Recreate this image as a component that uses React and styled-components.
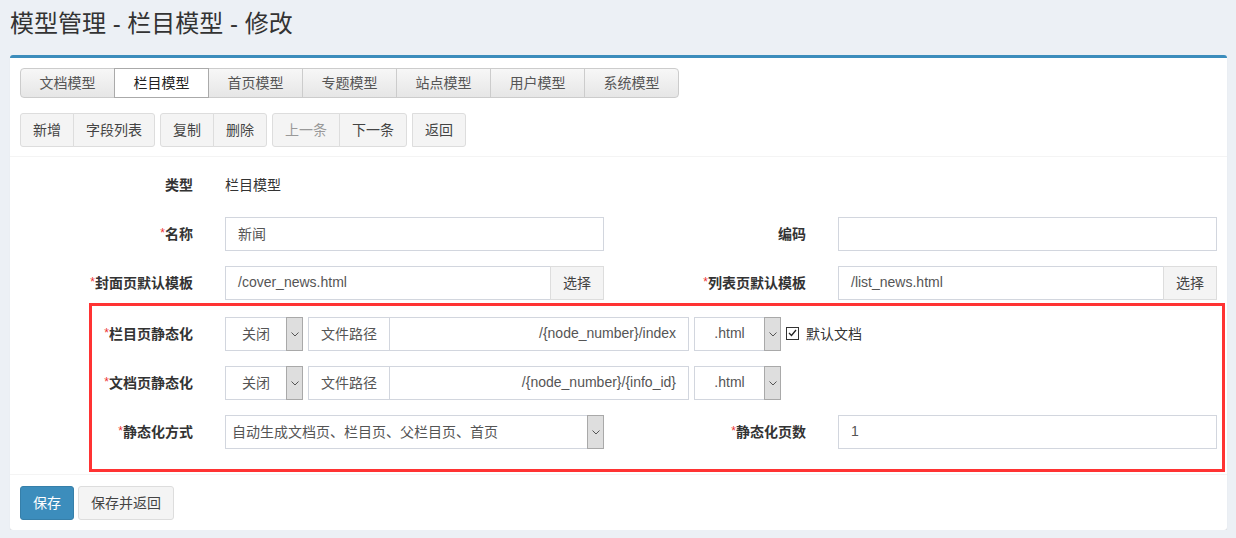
import React from 'react';
import styled, { createGlobalStyle } from 'styled-components';

const GlobalStyle = createGlobalStyle`
  body {
    margin: 0;
    background: #ecf0f5;
    font-family: "Liberation Sans", "Noto Sans CJK SC", sans-serif;
    font-size: 14px;
    color: #333;
  }
`;

const PageTitle = styled.h1`
  margin: 0;
  padding: 7px 10px 14px;
  font-size: 24px;
  font-weight: 400;
  line-height: 34px;
  color: #333;
`;

const Box = styled.div`
  margin: 0 9px 0 10px;
  background: #fff;
  border-top: 3px solid #3c8dbc;
  border-radius: 3px;
  box-shadow: 0 1px 1px rgba(0, 0, 0, 0.1);
`;

const BoxHeader = styled.div`
  padding: 10px 10px 9px;
  border-bottom: 1px solid #f4f4f4;
`;

const Tabs = styled.div`
  display: flex;
  margin-bottom: 15px;
`;

const Tab = styled.div`
  box-sizing: border-box;
  width: 95px;
  height: 30px;
  padding-bottom: 2px;
  margin-left: -1px;
  display: flex;
  align-items: center;
  justify-content: center;
  border: 1px solid ${p => (p.$active ? '#aaa' : '#ccc')};
  background: ${p => (p.$active ? '#fff' : 'linear-gradient(#f7f7f7, #e6e6e6)')};
  color: ${p => (p.$active ? '#222' : '#555')};
  position: relative;
  z-index: ${p => (p.$active ? 1 : 0)};
  &:first-child { margin-left: 0; border-radius: 4px 0 0 4px; }
  &:last-child { border-radius: 0 4px 4px 0; }
`;

const Toolbar = styled.div`
  display: flex;
  gap: 5px;
`;

const BtnGroup = styled.div`
  display: flex;
`;

const Btn = styled.button`
  box-sizing: border-box;
  height: 34px;
  padding: 0 12px 2px;
  font: inherit;
  font-size: 14px;
  border: 1px solid ${p => (p.$primary ? '#367fa9' : '#ddd')};
  background: ${p => (p.$primary ? '#3c8dbc' : '#f4f4f4')};
  color: ${p => (p.$primary ? '#fff' : p.disabled ? '#999' : '#444')};
  border-radius: 3px;
  ${BtnGroup} > & {
    border-radius: 0;
    margin-left: -1px;
  }
  ${BtnGroup} > &:first-child { margin-left: 0; border-radius: 3px 0 0 3px; }
  ${BtnGroup} > &:last-child { border-radius: 0 3px 3px 0; }
`;

const BoxBody = styled.div`
  padding: 11px 10px 2px;
`;

const Row = styled.div`
  display: flex;
  align-items: center;
  height: 34px;
  margin-bottom: 15px;
`;

const Field = styled.div`
  display: flex;
  align-items: center;
  flex: ${p => (p.$half ? `0 0 ${p.$labelWidth + 440}px` : '0 0 auto')};
`;

const Label = styled.div`
  flex: 0 0 ${p => p.$width}px;
  margin-right: 32px;
  padding-bottom: 3px;
  text-align: right;
  font-weight: bold;
  color: #333;
`;

const Star = styled.span`
  color: #e33;
  font-weight: normal;
  font-size: 12px;
  vertical-align: 2px;
`;

const Value = styled.div`
  padding-bottom: 3px;
  color: #333;
`;

const Input = styled.div`
  box-sizing: border-box;
  width: ${p => p.$width || 379}px;
  height: 34px;
  padding: 0 12px 3px;
  display: flex;
  align-items: center;
  justify-content: ${p => (p.$right ? 'flex-end' : 'flex-start')};
  border: 1px solid #d2d6de;
  color: #555;
  background: #fff;
  white-space: nowrap;
`;

const InputGroup = styled.div`
  display: flex;
  & > * + * { margin-left: -1px; }
`;

const Addon = styled.div`
  box-sizing: border-box;
  height: 34px;
  padding: 0 12px 3px;
  display: flex;
  align-items: center;
  border: 1px solid ${p => (p.$grey ? '#ddd' : '#d2d6de')};
  background: ${p => (p.$grey ? '#f4f4f4' : '#fff')};
  color: ${p => (p.$grey ? '#444' : '#555')};
`;

const Select = styled.div`
  box-sizing: border-box;
  width: ${p => p.$width}px;
  height: 34px;
  display: flex;
  border: 1px solid #d2d6de;
  background: #fff;
  color: #555;
`;

const SelectText = styled.div`
  flex: 1;
  display: flex;
  align-items: center;
  justify-content: ${p => (p.$center ? 'center' : 'flex-start')};
  padding: 0 0 3px ${p => (p.$center ? 0 : 6)}px;
  white-space: nowrap;
`;

const Arrow = styled.div`
  box-sizing: border-box;
  width: 17px;
  margin: -1px -1px -1px 0;
  border: 1px solid #a9a9a9;
  background: #dedede;
  display: flex;
  align-items: center;
  justify-content: center;
`;

const Controls = styled.div`
  display: flex;
  align-items: center;
  gap: 5px;
`;

const Check = styled.label`
  display: flex;
  align-items: center;
  gap: 7px;
  color: #333;
  padding-bottom: 2px;
`;

const CheckBox = styled.span`
  box-sizing: border-box;
  width: 13px;
  height: 13px;
  border: 1px solid #333;
  display: flex;
  align-items: center;
  justify-content: center;
  background: #fff;
`;

const Highlight = styled.div`
  margin: -12px -8px 0 69px;
  padding: 11px 0 5px;
  border: 3px solid #f33;
`;

const BoxFooter = styled.div`
  display: flex;
  gap: 4px;
  padding: 11px 10px 10px;
  border-top: 1px solid #f4f4f4;
`;

const Chevron = () => (
  <svg width="8" height="5" viewBox="0 0 8 5">
    <path d="M0.5 0.5 L4 4 L7.5 0.5" fill="none" stroke="#555" strokeWidth="1" />
  </svg>
);

const Dropdown = ({ width, center, children }) => (
  <Select $width={width}>
    <SelectText $center={center}>{children}</SelectText>
    <Arrow><Chevron /></Arrow>
  </Select>
);

const FormLabel = ({ width, required, children }) => (
  <Label $width={width}>
    {required && <Star>*</Star>}
    {children}
  </Label>
);

const tabs = ['文档模型', '栏目模型', '首页模型', '专题模型', '站点模型', '用户模型', '系统模型'];

const StaticRow = ({ lw, label, path, checkbox }) => (
  <Row>
    <Field $labelWidth={lw}>
      <FormLabel width={lw} required>{label}</FormLabel>
      <Controls>
        <Dropdown width={78} center>关闭</Dropdown>
        <InputGroup>
          <Addon>文件路径</Addon>
          <Input $width={300} $right>{path}</Input>
        </InputGroup>
        <Dropdown width={87} center>.html</Dropdown>
        {checkbox && (
          <Check>
            <CheckBox>
              <svg width="9" height="8" viewBox="0 0 9 8">
                <path d="M1 4 L3.5 6.5 L8 1" fill="none" stroke="#222" strokeWidth="1.3" />
              </svg>
            </CheckBox>
            默认文档
          </Check>
        )}
      </Controls>
    </Field>
  </Row>
);

export default function App() {
  const lw = 173;
  const hw = 101;
  return (
    <>
      <GlobalStyle />
      <PageTitle>模型管理 - 栏目模型 - 修改</PageTitle>
      <Box>
        <BoxHeader>
          <Tabs>
            {tabs.map(t => (
              <Tab key={t} $active={t === '栏目模型'}>{t}</Tab>
            ))}
          </Tabs>
          <Toolbar>
            <BtnGroup>
              <Btn>新增</Btn>
              <Btn>字段列表</Btn>
            </BtnGroup>
            <BtnGroup>
              <Btn>复制</Btn>
              <Btn>删除</Btn>
            </BtnGroup>
            <BtnGroup>
              <Btn disabled>上一条</Btn>
              <Btn>下一条</Btn>
            </BtnGroup>
            <BtnGroup>
              <Btn>返回</Btn>
            </BtnGroup>
          </Toolbar>
        </BoxHeader>

        <BoxBody>
          <Row>
            <Field $half $labelWidth={lw}>
              <FormLabel width={lw}>类型</FormLabel>
              <Value>栏目模型</Value>
            </Field>
          </Row>
          <Row>
            <Field $half $labelWidth={lw}>
              <FormLabel width={lw} required>名称</FormLabel>
              <Input>新闻</Input>
            </Field>
            <Field $half $labelWidth={lw}>
              <FormLabel width={lw}>编码</FormLabel>
              <Input />
            </Field>
          </Row>
          <Row>
            <Field $half $labelWidth={lw}>
              <FormLabel width={lw} required>封面页默认模板</FormLabel>
              <InputGroup>
                <Input $width={326}>/cover_news.html</Input>
                <Addon $grey>选择</Addon>
              </InputGroup>
            </Field>
            <Field $half $labelWidth={lw}>
              <FormLabel width={lw} required>列表页默认模板</FormLabel>
              <InputGroup>
                <Input $width={326}>/list_news.html</Input>
                <Addon $grey>选择</Addon>
              </InputGroup>
            </Field>
          </Row>

          <Highlight>
            <StaticRow lw={hw} label="栏目页静态化" path="/{node_number}/index" checkbox />
            <StaticRow lw={hw} label="文档页静态化" path="/{node_number}/{info_id}" />
            <Row>
              <Field $half $labelWidth={hw}>
                <FormLabel width={hw} required>静态化方式</FormLabel>
                <Dropdown width={379}>自动生成文档页、栏目页、父栏目页、首页</Dropdown>
              </Field>
              <Field $half $labelWidth={lw}>
                <FormLabel width={lw} required>静态化页数</FormLabel>
                <Input>1</Input>
              </Field>
            </Row>
          </Highlight>
        </BoxBody>

        <BoxFooter>
          <Btn $primary>保存</Btn>
          <Btn>保存并返回</Btn>
        </BoxFooter>
      </Box>
    </>
  );
}
